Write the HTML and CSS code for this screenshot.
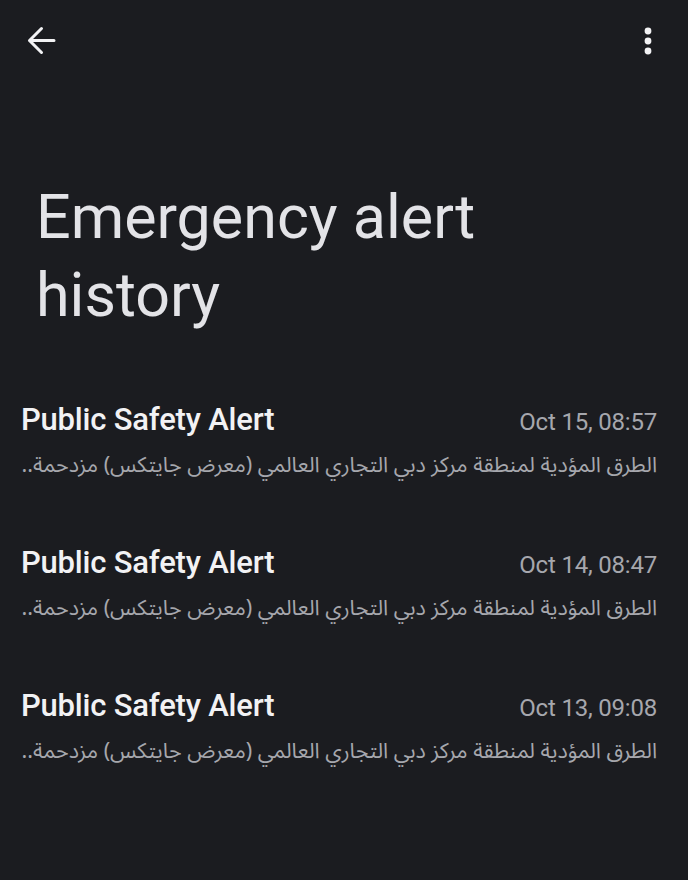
FILE: index.html
```html
<!DOCTYPE html>
<html lang="en">
<head>
<meta charset="utf-8">
<link rel="stylesheet" href="styles.css">
</head>
<body>
<div class="screen">
  <header class="topbar">
    <button class="icon-btn back" aria-label="Back">
      <svg width="30" height="30" viewBox="0 0 30 30"><path d="M28 14.5H3.5M15.5 2.5 3.5 14.5l12 12" fill="none" stroke="#f2f2f4" stroke-width="3" stroke-linecap="round" stroke-linejoin="round"/></svg>
    </button>
    <button class="icon-btn more" aria-label="More">
      <svg width="10" height="30" viewBox="0 0 10 30"><circle cx="5" cy="5" r="3.4" fill="#f2f2f4"/><circle cx="5" cy="15" r="3.4" fill="#f2f2f4"/><circle cx="5" cy="25" r="3.4" fill="#f2f2f4"/></svg>
    </button>
  </header>
  <h1 class="title">Emergency alert history</h1>
  <ul class="list">
    <li class="item">
      <div class="row"><span class="name">Public Safety Alert</span><span class="date">Oct 15, 08:57</span></div>
      <p class="body" dir="rtl">الطرق المؤدية لمنطقة مركز دبي التجاري العالمي (معرض جايتكس) مزدحمة..</p>
    </li>
    <li class="item">
      <div class="row"><span class="name">Public Safety Alert</span><span class="date">Oct 14, 08:47</span></div>
      <p class="body" dir="rtl">الطرق المؤدية لمنطقة مركز دبي التجاري العالمي (معرض جايتكس) مزدحمة..</p>
    </li>
    <li class="item">
      <div class="row"><span class="name">Public Safety Alert</span><span class="date">Oct 13, 09:08</span></div>
      <p class="body" dir="rtl">الطرق المؤدية لمنطقة مركز دبي التجاري العالمي (معرض جايتكس) مزدحمة..</p>
    </li>
  </ul>
</div>
</body>
</html>
```
FILE: styles.css
```css
* { box-sizing: border-box; }
html, body { margin: 0; padding: 0; background: #1b1c20; }
body { font-family: Roboto, "Noto Sans", sans-serif; color: #e4e4e8; }
.screen { width: 688px; height: 880px; overflow: hidden; }
.topbar { display: flex; justify-content: space-between; align-items: center; padding: 26px 35px 0 26px; height: 56px; }
.icon-btn { background: none; border: 0; padding: 0; height: 30px; display: flex; }
.title { margin: 122px 0 0 36px; width: 480px; font-weight: 400; font-size: 61px; line-height: 78px; color: #e3e3e7; }
.list { list-style: none; margin: 67px 0 0; padding: 0 31px 0 21px; }
.item { height: 143px; }
.row { display: flex; justify-content: space-between; align-items: baseline; }
.name { font-size: 31px; font-weight: 500; color: #f2f2f4; letter-spacing: -0.2px; }
.date { font-size: 24px; color: #a6a7ad; letter-spacing: -0.2px; }
.body { margin: 14px 0 0; font-family: "Noto Sans Arabic", "DejaVu Sans", sans-serif; font-size: 21.5px; line-height: 26px; color: #a6a7ad; text-align: right; }
```
